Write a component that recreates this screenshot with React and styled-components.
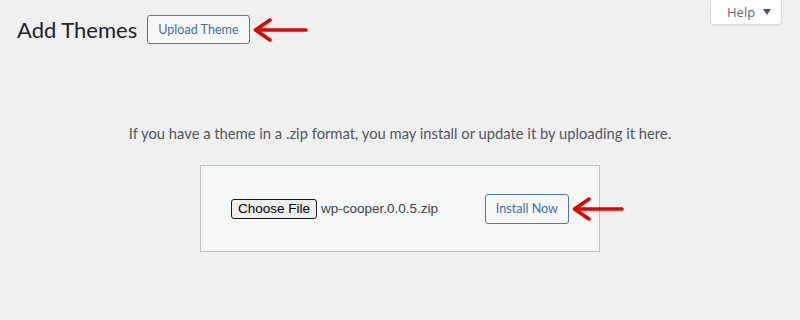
import React from "react";
import styled, { createGlobalStyle } from "styled-components";

const GlobalStyle = createGlobalStyle`
  html, body {
    margin: 0;
    padding: 0;
    background: #f0f0f1;
  }
  body {
    font-family: Lato, "Open Sans", sans-serif;
    color: #3c434a;
  }
`;

const Page = styled.div`
  width: 800px;
  height: 320px;
  overflow: hidden;
  box-sizing: border-box;
`;

const TopBar = styled.div`
  display: flex;
  justify-content: space-between;
  align-items: flex-start;
  padding-left: 17px;
  padding-right: 18px;
`;

const TitleRow = styled.div`
  display: flex;
  align-items: center;
  margin-top: 15px;
`;

const Title = styled.h1`
  margin: 0;
  font-size: 22px;
  font-weight: 400;
  line-height: 29px;
  color: #1d2327;
`;

const OutlineButton = styled.button`
  font-family: inherit;
  font-size: 12.6px;
  height: ${(p) => p.height || 29}px;
  padding: 0 10px;
  margin-left: ${(p) => p.gap || 0}px;
  border: 1px solid #4f79ad;
  border-radius: 3px;
  background: #f6f7f7;
  color: #4a6fa5;
  white-space: nowrap;
  cursor: pointer;
`;

const Arrow = styled.svg`
  display: block;
  margin-left: 2px;
  flex-shrink: 0;
`;

/* the callout arrow sticks out past the form's border, so it overlays */
const CalloutArrow = styled(Arrow)`
  position: absolute;
  left: 100%;
  top: 50%;
  transform: translateY(-50%);
`;

const InstallWrap = styled.div`
  position: relative;
  display: flex;
  align-items: center;
`;

const HelpTab = styled.button`
  display: flex;
  align-items: center;
  gap: 8px;
  width: 72px;
  height: 25px;
  padding: 0 0 0 16px;
  box-sizing: border-box;
  font-family: "Open Sans", sans-serif;
  font-size: 13px;
  color: #646970;
  background: #fff;
  border: 1px solid #dcdcde;
  border-top: none;
  border-radius: 0 0 4px 4px;
  box-shadow: 0 1px 1px rgba(0, 0, 0, 0.05);
  cursor: pointer;
`;

const Content = styled.div`
  display: flex;
  flex-direction: column;
  align-items: center;
  padding-top: 79px;
`;

const Help = styled.p`
  margin: 0;
  font-size: 14.75px;
  line-height: 20px;
  color: #50575e;
`;

const UploadForm = styled.form`
  display: flex;
  align-items: center;
  margin-top: 22px;
  width: 400px;
  height: 87px;
  box-sizing: border-box;
  padding: 0 30px;
  background: #f6f7f7;
  border: 1px solid #c3c4c7;
`;

const FilePicker = styled.label`
  display: flex;
  align-items: center;
  gap: 4px;
  font-family: "Liberation Sans", Arial, sans-serif;
  font-size: 13.5px;
  color: #3c434a;
  white-space: nowrap;
  flex: 1;
`;

const ChooseButton = styled.span`
  display: inline-flex;
  align-items: center;
  height: 20px;
  padding: 0 6px;
  box-sizing: border-box;
  background: #efefef;
  border: 1px solid #1a1a1a;
  border-radius: 3px;
  color: #000;
`;

const FileName = styled.span`
  color: #3c434a;
`;

const arrowPath = (width) => `M${width - 2} 13 H4 M18 3 L3.5 13 L18 23`;

const ArrowStroke = ({ width }) => (
  <path
    d={arrowPath(width)}
    fill="none"
    stroke="#e60000"
    strokeWidth="3.5"
    strokeLinecap="round"
    strokeLinejoin="round"
  />
);

export default function App() {
  return (
    <Page>
      <GlobalStyle />
      <TopBar>
        <TitleRow>
          <Title>Add Themes</Title>
          <OutlineButton gap={10} type="button">Upload Theme</OutlineButton>
          <Arrow width={56} height={26} viewBox="0 0 56 26">
            <ArrowStroke width={56} />
          </Arrow>
        </TitleRow>
        <HelpTab type="button">
          Help
          <svg width="8" height="6" viewBox="0 0 8 6">
            <path d="M0 0 H8 L4 6 Z" fill="#50575e" />
          </svg>
        </HelpTab>
      </TopBar>
      <Content>
        <Help>If you have a theme in a .zip format, you may install or update it by uploading it here.</Help>
        <UploadForm onSubmit={(e) => e.preventDefault()}>
          <FilePicker>
            <ChooseButton>Choose File</ChooseButton>
            <FileName>wp-cooper.0.0.5.zip</FileName>
          </FilePicker>
          <InstallWrap>
            <OutlineButton height={30} type="submit">Install Now</OutlineButton>
            <CalloutArrow width={53} height={26} viewBox="0 0 53 26">
              <ArrowStroke width={53} />
            </CalloutArrow>
          </InstallWrap>
        </UploadForm>
      </Content>
    </Page>
  );
}
